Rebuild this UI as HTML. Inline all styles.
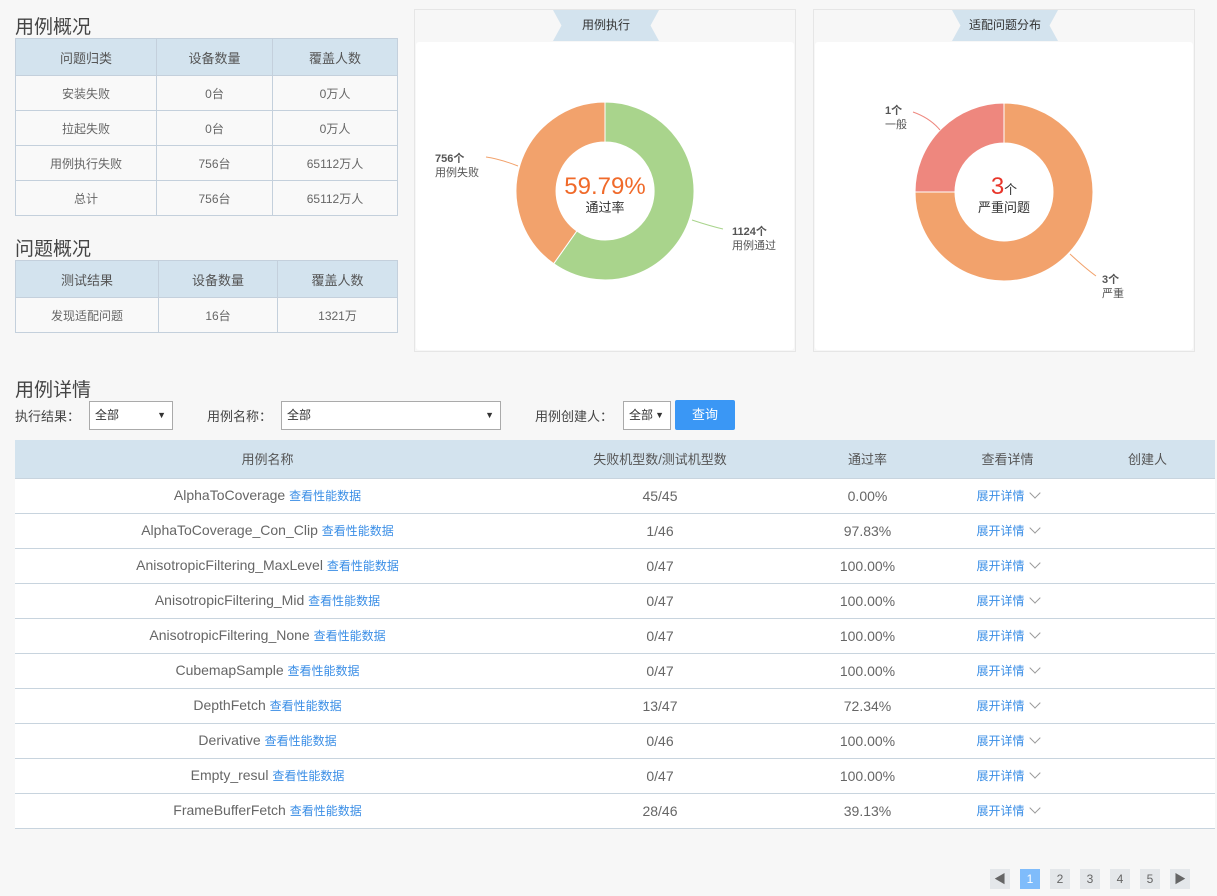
<!DOCTYPE html>
<html><head><meta charset="utf-8"><style>
*{margin:0;padding:0;box-sizing:border-box}
body{width:1217px;height:896px;background:#f7f7f7;font-family:"Liberation Sans","Noto Sans CJK SC",sans-serif;color:#555;position:relative;overflow:hidden;font-size:13px}
.abs{position:absolute}
h2{position:absolute;font-weight:normal;font-size:19px;color:#444;left:15px}
table{border-collapse:collapse;position:absolute;table-layout:fixed}
.t1 td,.t1 th{border:1px solid #c4d0dc;text-align:center;font-weight:normal;font-size:12px;color:#666}
.t1 th{background:#d3e3ee;font-size:13px;color:#555;height:37px}
.t1 td{background:#f9f9f9;height:35px}
.panel{position:absolute;top:9px;width:382px;height:343px;border:1px solid #e6e6e6;background:#f7f7f7}
.panel .body{position:absolute;left:1px;right:1px;top:32px;bottom:1px;background:#fff;border-radius:3px}
.tab{position:absolute;top:0;height:31px;width:106px;left:138px;background:#d3e3ee;clip-path:polygon(0 0,100% 0,92% 50%,100% 100%,0 100%,8% 50%);text-align:center;line-height:31px;font-size:12px;color:#333}
.main th,.main td{text-align:center;font-weight:normal}
.main th{background:#d3e3ee;height:38px;font-size:13px;color:#555}
.main td{background:#fff;height:35px;border-top:1px solid #c8d4de;font-size:14px;color:#666}
.main tr:last-child td{border-bottom:1px solid #c8d4de}
.lk{color:#3a8ee6;font-size:12px}
.chev{display:inline-block;width:8px;height:8px;border-right:1.5px solid #999;border-bottom:1.5px solid #999;transform:rotate(45deg);margin-left:6px;position:relative;top:-3px}
.sel{position:absolute;top:401px;height:29px;border:1px solid #aaa;background:#fff;font-size:12px;line-height:27px;padding-left:5px;color:#333}
.sel span{position:absolute;right:6px;top:0;font-size:9px}
.lbl{position:absolute;top:406px;font-size:13px;color:#444}
.pg{position:absolute;top:869px;width:20px;height:20px;background:#e4e7ea;text-align:center;line-height:20px;font-size:12px;color:#666}
</style></head><body>
<h2 style="top:12px">用例概况</h2>
<table class="t1" style="left:15px;top:38px;width:382px">
<colgroup><col style="width:141px"><col style="width:116px"><col style="width:125px"></colgroup>
<tr><th>问题归类</th><th>设备数量</th><th>覆盖人数</th></tr>
<tr><td>安装失败</td><td>0台</td><td>0万人</td></tr>
<tr><td>拉起失败</td><td>0台</td><td>0万人</td></tr>
<tr><td>用例执行失败</td><td>756台</td><td>65112万人</td></tr>
<tr><td>总计</td><td>756台</td><td>65112万人</td></tr>
</table>
<h2 style="top:234px">问题概况</h2>
<table class="t1" style="left:15px;top:260px;width:382px">
<colgroup><col style="width:143px"><col style="width:119px"><col style="width:120px"></colgroup>
<tr><th>测试结果</th><th>设备数量</th><th>覆盖人数</th></tr>
<tr><td>发现适配问题</td><td>16台</td><td>1321万</td></tr>
</table>

<div class="panel" style="left:414px"><div class="body"></div><div class="tab">用例执行</div></div>
<div class="panel" style="left:813px"><div class="body"></div><div class="tab">适配问题分布</div></div>

<svg class="abs" style="left:0;top:0" width="1217" height="360">
<path d="M605,102 A89 89 0 1 1 553.7,263.7 L576.8,231 A49 49 0 1 0 605,142 Z" fill="#a9d48c" stroke="#fff" stroke-width="1"/>
<path d="M553.7,263.7 A89 89 0 0 1 605,102 L605,142 A49 49 0 0 0 576.8,231 Z" fill="#f2a26c" stroke="#fff" stroke-width="1"/>
<path d="M486,157 Q500,159 518,166" stroke="#f2a26c" fill="none"/>
<path d="M692,220 Q710,226 723,229" stroke="#a9d48c" fill="none"/>
<text x="605" y="194" text-anchor="middle" font-size="24" fill="#f06a2a" font-family="Liberation Sans">59.79%</text>
<text x="605" y="212" text-anchor="middle" font-size="13" fill="#333" font-family="Liberation Sans,Noto Sans CJK SC">通过率</text>
<text x="435" y="162" font-size="11" font-weight="bold" fill="#555" font-family="Liberation Sans,Noto Sans CJK SC">756个</text>
<text x="435" y="176" font-size="11" fill="#555" font-family="Liberation Sans,Noto Sans CJK SC">用例失败</text>
<text x="732" y="235" font-size="11" font-weight="bold" fill="#555" font-family="Liberation Sans,Noto Sans CJK SC">1124个</text>
<text x="732" y="249" font-size="11" fill="#555" font-family="Liberation Sans,Noto Sans CJK SC">用例通过</text>

<path d="M915,192 A89 89 0 0 1 1004,103 L1004,143 A49 49 0 0 0 955,192 Z" fill="#ee877e" stroke="#fff" stroke-width="1"/>
<path d="M1004,103 A89 89 0 1 1 915,192 L955,192 A49 49 0 1 0 1004,143 Z" fill="#f2a26c" stroke="#fff" stroke-width="1"/>
<path d="M913,112 Q930,118 940,130" stroke="#ee877e" fill="none"/>
<path d="M1070,254 Q1085,268 1096,276" stroke="#f2a26c" fill="none"/>
<text x="1004" y="194" text-anchor="middle" font-family="Liberation Sans,Noto Sans CJK SC"><tspan font-size="24" fill="#e8352a">3</tspan><tspan font-size="13" fill="#333">个</tspan></text>
<text x="1004" y="212" text-anchor="middle" font-size="13" fill="#333" font-family="Liberation Sans,Noto Sans CJK SC">严重问题</text>
<text x="885" y="114" font-size="11" font-weight="bold" fill="#555" font-family="Liberation Sans,Noto Sans CJK SC">1个</text>
<text x="885" y="128" font-size="11" fill="#555" font-family="Liberation Sans,Noto Sans CJK SC">一般</text>
<text x="1102" y="283" font-size="11" font-weight="bold" fill="#555" font-family="Liberation Sans,Noto Sans CJK SC">3个</text>
<text x="1102" y="297" font-size="11" fill="#555" font-family="Liberation Sans,Noto Sans CJK SC">严重</text>
</svg>

<h2 style="top:375px">用例详情</h2>
<div class="lbl" style="left:15px">执行结果：</div>
<div class="sel" style="left:89px;width:84px">全部<span>▼</span></div>
<div class="lbl" style="left:207px">用例名称：</div>
<div class="sel" style="left:281px;width:220px">全部<span>▼</span></div>
<div class="lbl" style="left:535px">用例创建人：</div>
<div class="sel" style="left:623px;width:48px">全部<span>▼</span></div>
<div class="abs" style="left:675px;top:400px;width:60px;height:30px;background:#3a97f5;border-radius:2px;color:#fff;text-align:center;line-height:30px;font-size:13px">查询</div>

<table class="main" style="left:15px;top:440px;width:1200px">
<colgroup><col style="width:505px"><col style="width:280px"><col style="width:135px"><col style="width:145px"><col style="width:135px"></colgroup>
<tr><th>用例名称</th><th>失败机型数/测试机型数</th><th>通过率</th><th>查看详情</th><th>创建人</th></tr>
<tr><td>AlphaToCoverage <span class="lk">查看性能数据</span></td><td>45/45</td><td>0.00%</td><td><span class="lk">展开详情</span><span class="chev"></span></td><td></td></tr>
<tr><td>AlphaToCoverage_Con_Clip <span class="lk">查看性能数据</span></td><td>1/46</td><td>97.83%</td><td><span class="lk">展开详情</span><span class="chev"></span></td><td></td></tr>
<tr><td>AnisotropicFiltering_MaxLevel <span class="lk">查看性能数据</span></td><td>0/47</td><td>100.00%</td><td><span class="lk">展开详情</span><span class="chev"></span></td><td></td></tr>
<tr><td>AnisotropicFiltering_Mid <span class="lk">查看性能数据</span></td><td>0/47</td><td>100.00%</td><td><span class="lk">展开详情</span><span class="chev"></span></td><td></td></tr>
<tr><td>AnisotropicFiltering_None <span class="lk">查看性能数据</span></td><td>0/47</td><td>100.00%</td><td><span class="lk">展开详情</span><span class="chev"></span></td><td></td></tr>
<tr><td>CubemapSample <span class="lk">查看性能数据</span></td><td>0/47</td><td>100.00%</td><td><span class="lk">展开详情</span><span class="chev"></span></td><td></td></tr>
<tr><td>DepthFetch <span class="lk">查看性能数据</span></td><td>13/47</td><td>72.34%</td><td><span class="lk">展开详情</span><span class="chev"></span></td><td></td></tr>
<tr><td>Derivative <span class="lk">查看性能数据</span></td><td>0/46</td><td>100.00%</td><td><span class="lk">展开详情</span><span class="chev"></span></td><td></td></tr>
<tr><td>Empty_resul <span class="lk">查看性能数据</span></td><td>0/47</td><td>100.00%</td><td><span class="lk">展开详情</span><span class="chev"></span></td><td></td></tr>
<tr><td>FrameBufferFetch <span class="lk">查看性能数据</span></td><td>28/46</td><td>39.13%</td><td><span class="lk">展开详情</span><span class="chev"></span></td><td></td></tr>
</table>

<div class="pg" style="left:990px">◀</div>
<div class="pg" style="left:1020px;background:#7fbcfb;color:#fff">1</div>
<div class="pg" style="left:1050px">2</div>
<div class="pg" style="left:1080px">3</div>
<div class="pg" style="left:1110px">4</div>
<div class="pg" style="left:1140px">5</div>
<div class="pg" style="left:1170px">▶</div>
</body></html>
